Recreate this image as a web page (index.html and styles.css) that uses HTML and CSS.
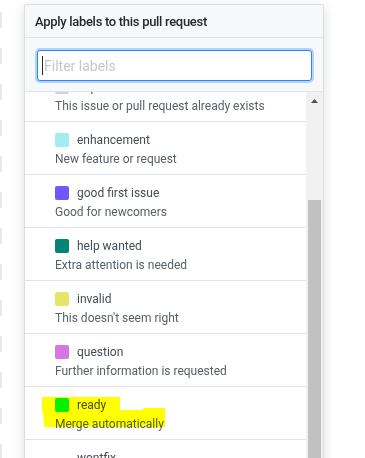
FILE: index.html
```html
<!DOCTYPE html>
<html>
<head>
    <link rel="stylesheet" href="styles.css">
</head>
<body>
    <div class="page-edge">
        <div class="edge-mark"></div>
        <div class="edge-mark"></div>
        <div class="edge-mark"></div>
        <div class="edge-mark"></div>
        <div class="edge-mark"></div>
        <div class="edge-mark"></div>
        <div class="edge-mark"></div>
        <div class="edge-mark"></div>
        <div class="edge-mark"></div>
        <div class="edge-mark"></div>
        <div class="edge-mark"></div>
        <div class="edge-mark"></div>
        <div class="edge-mark"></div>
    </div>

    <div class="select-menu">
        <div class="menu-header">
            <span class="menu-title">Apply labels to this pull request</span>
        </div>
        <div class="menu-filter">
            <div class="filter-input">
                <span class="caret"></span>
                <span class="placeholder">Filter labels</span>
            </div>
        </div>
        <div class="menu-body">
            <div class="menu-list">
                <div class="menu-item first">
                    <div class="label-name"><span class="swatch swatch-duplicate"></span>duplicate</div>
                    <div class="label-desc">This issue or pull request already exists</div>
                </div>
                <div class="menu-item">
                    <div class="label-name"><span class="swatch swatch-enhancement"></span>enhancement</div>
                    <div class="label-desc">New feature or request</div>
                </div>
                <div class="menu-item">
                    <div class="label-name"><span class="swatch swatch-good-first"></span>good first issue</div>
                    <div class="label-desc">Good for newcomers</div>
                </div>
                <div class="menu-item">
                    <div class="label-name"><span class="swatch swatch-help"></span>help wanted</div>
                    <div class="label-desc">Extra attention is needed</div>
                </div>
                <div class="menu-item">
                    <div class="label-name"><span class="swatch swatch-invalid"></span>invalid</div>
                    <div class="label-desc">This doesn't seem right</div>
                </div>
                <div class="menu-item">
                    <div class="label-name"><span class="swatch swatch-question"></span>question</div>
                    <div class="label-desc">Further information is requested</div>
                </div>
                <div class="menu-item">
                    <div class="label-name"><span class="swatch swatch-ready"></span>ready</div>
                    <div class="label-desc">Merge automatically</div>
                </div>
                <div class="menu-item">
                    <div class="label-name"><span class="swatch swatch-wontfix"></span>wontfix</div>
                    <div class="label-desc">This will not be worked on</div>
                </div>
            </div>
            <div class="scrollbar">
                <div class="scroll-arrow">
                    <svg width="7" height="4" viewBox="0 0 7 4"><polygon points="0,4 3.5,0 7,4" fill="#505050"/></svg>
                </div>
                <div class="scroll-thumb"></div>
            </div>
        </div>
    </div>

    <svg class="marker" width="365" height="458" viewBox="0 0 365 458">
        <polygon points="42,397 120,397 120,410 142,410 144,408 165,408 165,427 44,427 43,412 42,411" fill="#ffff00"/>
    </svg>
</body>
</html>
```

FILE: styles.css
```css
html, body {
    margin: 0;
    height: 458px;
    overflow: hidden;
    background: #fff;
    font-family: Roboto, "Liberation Sans", sans-serif;
}

.page-edge {
    display: flex;
    flex-direction: column;
    gap: 20px;
    padding-top: 12px;
}

.edge-mark {
    width: 2px;
    height: 16px;
    background: #e6e8eb;
}

.select-menu {
    position: absolute;
    top: 4px;
    left: 24px;
    width: 298px;
    height: 520px;
    border: 1px solid rgba(27, 31, 35, 0.15);
    border-radius: 3px 3px 0 0;
    box-shadow: 0 3px 12px rgba(27, 31, 35, 0.15);
    background: #fff;
    display: flex;
    flex-direction: column;
    overflow: hidden;
}

.menu-header {
    height: 32px;
    padding: 0 10px;
    display: flex;
    align-items: center;
    background: #f6f8fa;
    border-bottom: 1px solid #e1e4e8;
}

.menu-title {
    font-size: 13px;
    font-weight: 500;
    letter-spacing: -0.3px;
    color: #24292e;
}

.menu-filter {
    padding: 12px 11px 10px 12px;
    background: #f6f8fa;
    border-bottom: 1px solid #e1e4e8;
}

.filter-input {
    height: 31px;
    box-sizing: border-box;
    border: 1px solid #2188ff;
    border-radius: 3px;
    box-shadow: 0 0 0 2px #b6d3f8;
    background: #fff;
    display: flex;
    align-items: center;
    padding-left: 4px;
}

.caret {
    width: 1px;
    height: 19px;
    background: #24292e;
}

.placeholder {
    font-size: 14px;
    color: #c4c8cd;
    margin-left: 1px;
}

.menu-body {
    flex: 1;
    display: flex;
    min-height: 0;
}

.menu-list {
    flex: 1;
    overflow: hidden;
}

.menu-item {
    padding: 8px 0 6px 30px;
    border-bottom: 1px solid #e1e4e8;
}

.menu-item.first {
    margin-top: -23px;
}

.label-name {
    display: flex;
    align-items: center;
    gap: 8px;
    height: 20px;
    font-size: 12px;
    color: #444d56;
}

.label-desc {
    height: 18px;
    line-height: 18px;
    font-size: 12px;
    color: #586069;
}

.swatch {
    width: 14px;
    height: 14px;
    border-radius: 2px;
}

.swatch-duplicate { background: #cfd3d7; }
.swatch-enhancement { background: #a2eeef; }
.swatch-good-first { background: #7057ff; }
.swatch-help { background: #008672; }
.swatch-invalid { background: #e4e669; }
.swatch-question { background: #d876e3; }
.swatch-ready { background: #00f000; }
.swatch-wontfix { background: #ffffff; }

.scrollbar {
    width: 17px;
    background: #f1f1f1;
    display: flex;
    flex-direction: column;
    align-items: center;
}

.scroll-arrow {
    height: 17px;
    display: flex;
    align-items: center;
    justify-content: center;
}

.scroll-thumb {
    margin-top: 91px;
    width: 13px;
    flex: 1;
    background: #c1c1c1;
}

.marker {
    position: absolute;
    top: 0;
    left: 0;
    mix-blend-mode: multiply;
    pointer-events: none;
}
```
